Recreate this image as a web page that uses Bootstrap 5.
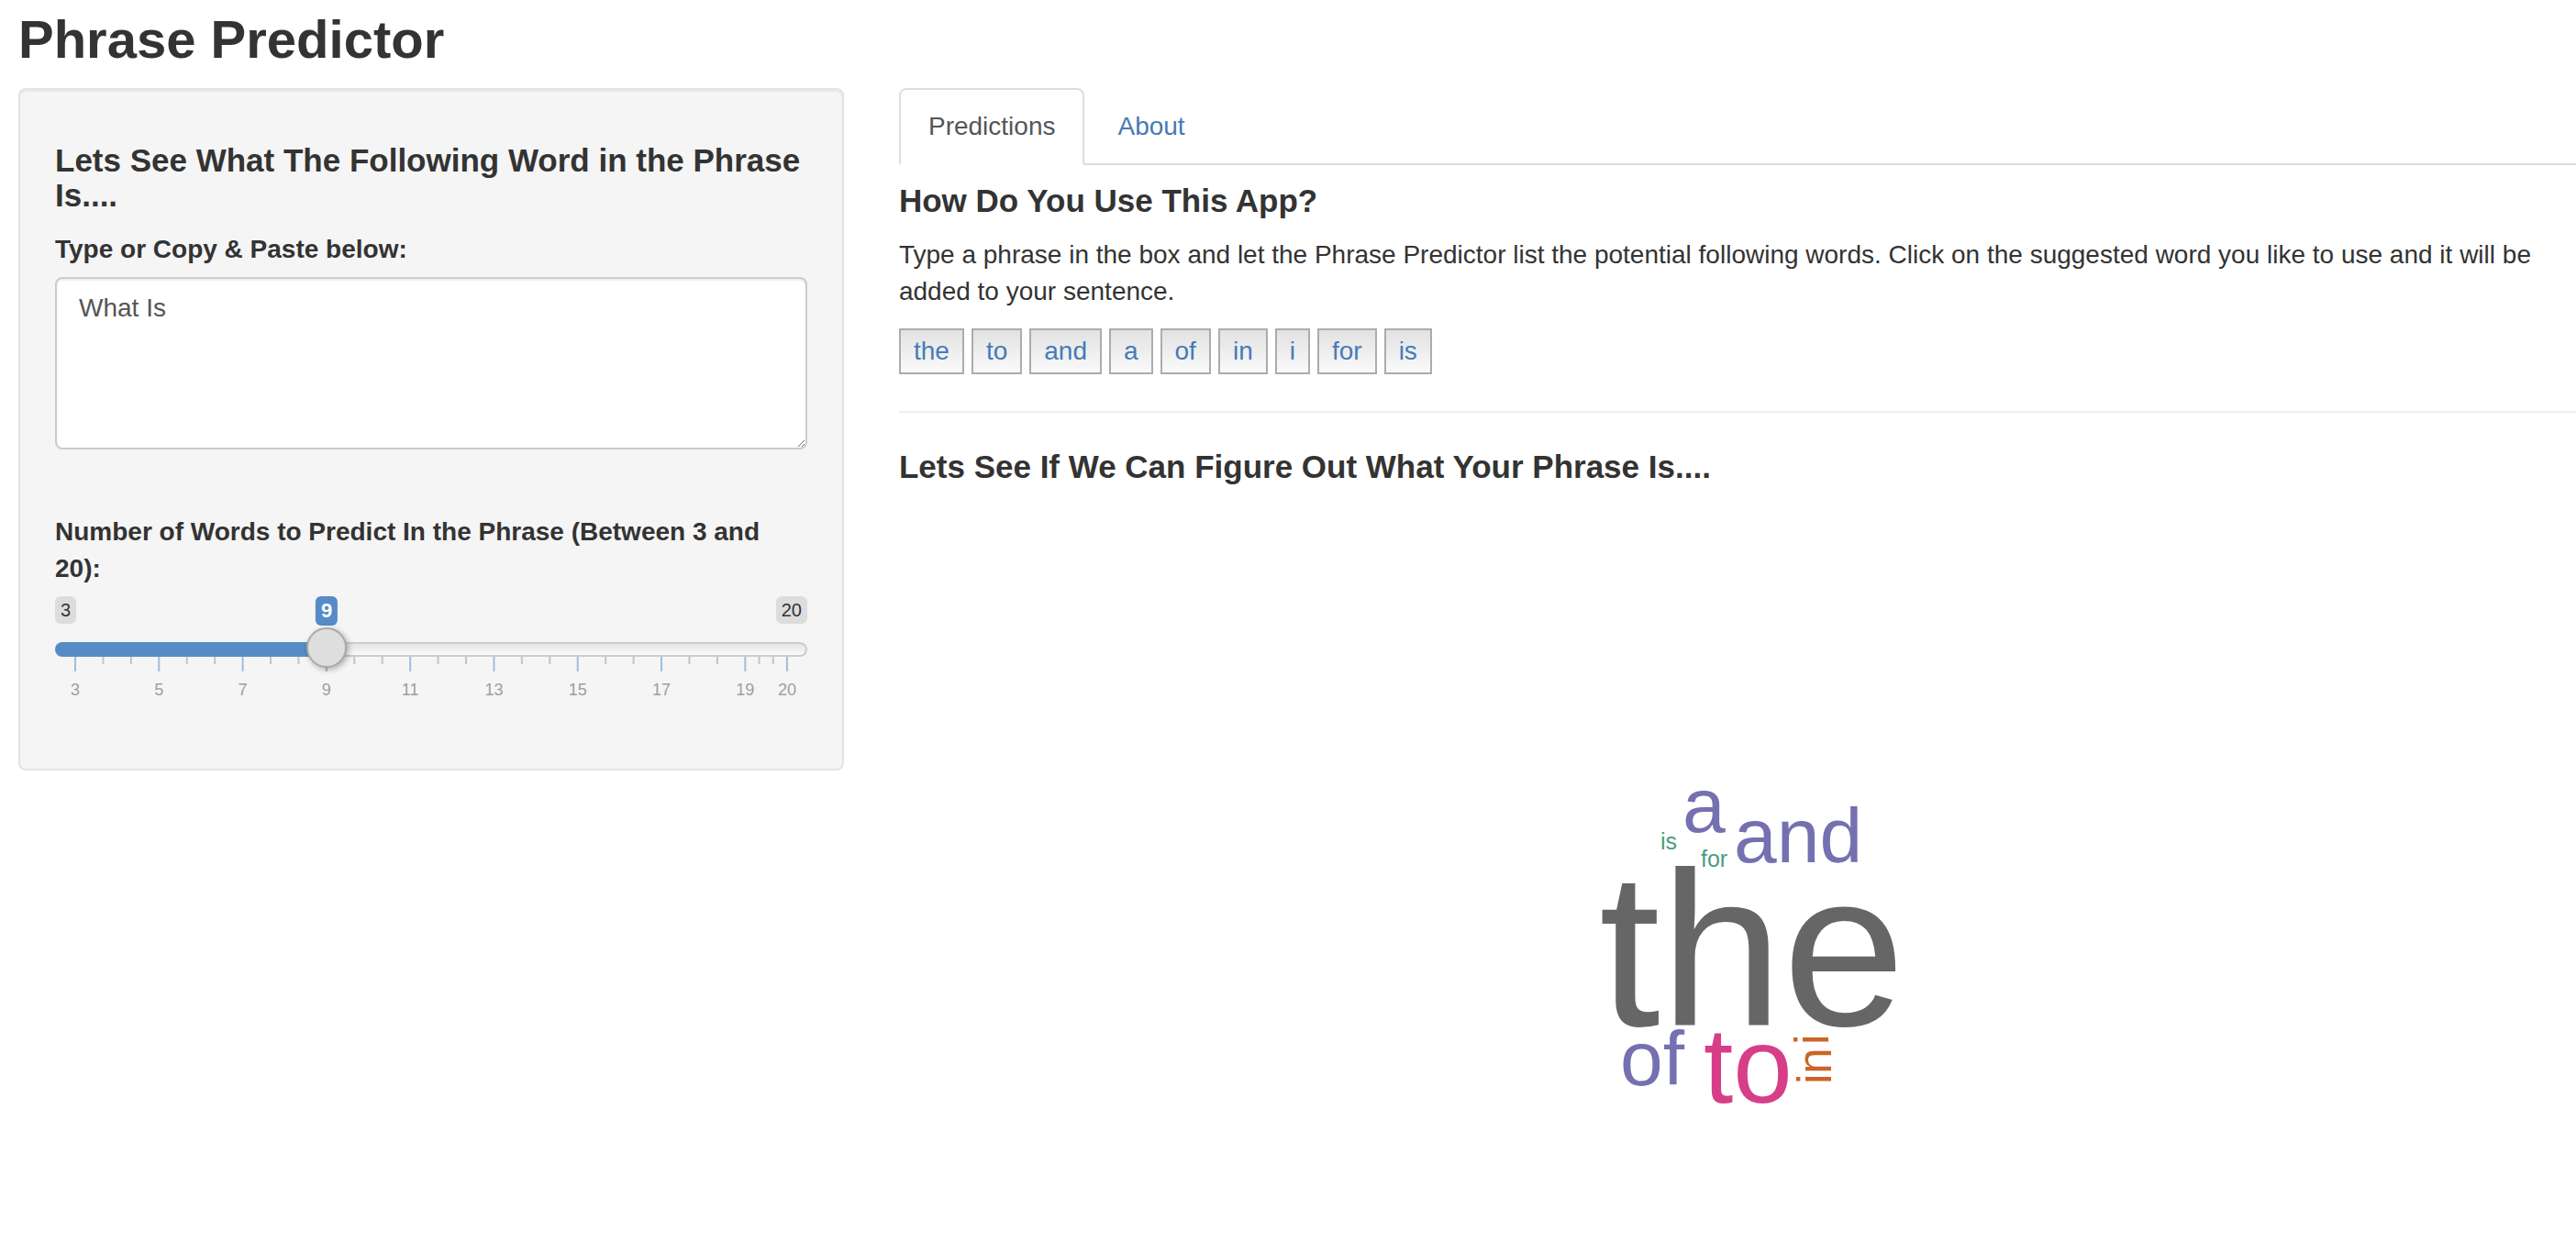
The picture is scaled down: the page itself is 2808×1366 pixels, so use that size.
<!DOCTYPE html>
<html lang="en">
<head>
<meta charset="utf-8">
<meta name="viewport" content="width=device-width, initial-scale=1">
<title>Phrase Predictor</title>
<link href="https://cdn.jsdelivr.net/npm/bootstrap@5.3.0/dist/css/bootstrap.min.css" rel="stylesheet">
<style>
  body { font-family: "Liberation Sans", Arial, sans-serif; font-size: 28px; line-height: 40px; color: #333; background: #fff; overflow-x: hidden; }
  .app-title { font-size: 58px; line-height: 66px; font-weight: 700; padding: 10px 0 20px; margin: 0; }
  .section-title { font-size: 35px; line-height: 38px; font-weight: 700; margin: 20px 0; }
  .app-shell { padding-left: 20px; }
  .layout-side { flex: 0 0 auto; width: 32.28%; }
  .layout-main { flex: 1 1 0; min-width: 0; margin-left: 60px; }
  .well { background: #f5f5f5; border: 2px solid #e3e3e3; border-radius: 8px; padding: 38px 38px 66px; box-shadow: inset 0 2px 2px rgba(0,0,0,.05); }
  .form-label { font-weight: 700; font-size: 28px; margin-bottom: 10px; display: block; }
  .phrase-box { height: 188px; font-size: 28px; line-height: 40px; padding: 12px 24px; color: #555; border: 2px solid #ccc; border-radius: 8px; box-shadow: inset 0 2px 2px rgba(0,0,0,.075); margin-bottom: 70px; }
  .range-tags { height: 36px; font-size: 20px; line-height: 30px; }
  .range-tags .limit { background: #ddd; border-radius: 6px; padding: 0 6px; height: 30px; }
  .range-now { position: absolute; top: 0; transform: translateX(-50%); background: #558bc7; color: #fff; font-size: 22px; font-weight: 700; line-height: 32px; border-radius: 6px; padding: 0 6px; }
  .word-range { -webkit-appearance: none; appearance: none; display: block; width: 100%; height: 44px; margin: 0; background: transparent; position: relative; z-index: 1; }
  .word-range::-webkit-slider-runnable-track { height: 16px; border-radius: 8px; border: 2px solid transparent; box-sizing: border-box;
    background: linear-gradient(to right, #558bc7 36%, transparent 36%) border-box, linear-gradient(to bottom, #e4e4e4, #fafafa) padding-box, linear-gradient(#ccc, #ccc) border-box; }
  .word-range::-webkit-slider-thumb { -webkit-appearance: none; width: 44px; height: 44px; margin-top: -18px; border-radius: 50%; background: #dedede; border: 2px solid #aaa; box-shadow: 2px 2px 6px rgba(0,0,0,.3); }
  .scale-ticks { display: block; width: 100%; height: 56px; overflow: visible; margin-top: -14px; }
  .scale-frame { padding: 0 22px; }
  .scale-ticks text { font-size: 18px; fill: #999fa5; text-anchor: middle; }
  .nav-tabs { border-bottom: 2px solid #ddd; --bs-nav-tabs-border-width: 2px; }
  .nav-tabs .nav-link { padding: 20px 30px; margin: 0 4px -2px 0; border: 2px solid transparent; border-radius: 8px 8px 0 0; color: #457bb7; line-height: 40px; }
  .nav-tabs .nav-link.active { color: #555; border-color: #ddd #ddd #fff; }
  .intro { margin: 0 0 20px; }
  .word-btn { height: 50px; padding: 0 14px; border: 2px solid #acacac; border-radius: 0; background: linear-gradient(to bottom, #e2e2e2, #fafafa); color: #457bb7; font-size: 28px; line-height: 44px; }
  .divider { border: 0; border-top: 2px solid #eee; opacity: 1; margin: 40px 0; }
</style>
</head>
<body>
<div class="app-shell">
  <h1 class="app-title">Phrase Predictor</h1>
  <div class="d-flex align-items-start">
    <form class="layout-side well">
      <h2 class="section-title">Lets See What The Following Word in the Phrase Is....</h2>
      <label class="form-label" for="phrase">Type or Copy &amp; Paste below:</label>
      <textarea class="form-control phrase-box" id="phrase">What Is</textarea>
      <label class="form-label" for="count">Number of Words to Predict In the Phrase (Between 3 and 20):</label>
      <div class="range-tags d-flex justify-content-between position-relative">
        <span class="limit">3</span>
        <output class="range-now" for="count" style="left: 36.1%">9</output>
        <span class="limit">20</span>
      </div>
      <input class="word-range" type="range" id="count" min="3" max="20" value="9">
      <div class="scale-frame">
        <svg class="scale-ticks" id="ticks" aria-hidden="true"></svg>
      </div>
    </form>
    <main class="layout-main">
      <ul class="nav nav-tabs">
        <li class="nav-item"><a class="nav-link active" href="#predictions">Predictions</a></li>
        <li class="nav-item"><a class="nav-link" href="#about">About</a></li>
      </ul>
      <section id="predictions">
        <h2 class="section-title">How Do You Use This App?</h2>
        <p class="intro">Type a phrase in the box and let the Phrase Predictor list the potential following words. Click on the suggested word you like to use and it will be added to your sentence.</p>
        <div class="d-flex flex-wrap gap-2">
          <button type="button" class="btn word-btn">the</button>
          <button type="button" class="btn word-btn">to</button>
          <button type="button" class="btn word-btn">and</button>
          <button type="button" class="btn word-btn">a</button>
          <button type="button" class="btn word-btn">of</button>
          <button type="button" class="btn word-btn">in</button>
          <button type="button" class="btn word-btn">i</button>
          <button type="button" class="btn word-btn">for</button>
          <button type="button" class="btn word-btn">is</button>
        </div>
        <hr class="divider">
        <h2 class="section-title">Lets See If We Can Figure Out What Your Phrase Is....</h2>
        <div class="d-flex justify-content-center">
          <svg width="800" height="800" viewBox="1494 547 800 800" role="img" aria-label="Word cloud">
            <g fill="#7570b0" font-size="84">
              <text x="1834" y="906">a</text>
              <text x="1890" y="939">and</text>
              <text x="1766" y="1182">of</text>
            </g>
            <g fill="#4a9d7c" font-size="25">
              <text x="1810" y="925">is</text>
              <text x="1854" y="944">for</text>
            </g>
            <text x="1743" y="1117" font-size="240" fill="#666">the</text>
            <text x="1857" y="1201" font-size="116" fill="#d63f88">to</text>
            <g fill="#c96527" font-size="51">
              <text transform="translate(1996 1181) rotate(-90)">in</text>
              <text transform="translate(1993 1138) rotate(-90)">i</text>
            </g>
          </svg>
        </div>
      </section>
    </main>
  </div>
</div>
<script src="https://cdn.jsdelivr.net/npm/bootstrap@5.3.0/dist/js/bootstrap.bundle.min.js"></script>
<script>
  // Scale under the slider: a labelled mark at each stop, two short marks between stops.
  const stops = [3, 5, 7, 9, 11, 13, 15, 17, 19, 20];
  const at = v => (v - 3) / 17 * 100 + '%';
  const line = (v, len, colour) =>
    `<line x1="${at(v)}" x2="${at(v)}" y1="0" y2="${len}" stroke="${colour}" stroke-width="2"/>`;
  document.getElementById('ticks').innerHTML = stops.map((v, i) => {
    let out = line(v, 16, '#a0bedd') + `<text x="${at(v)}" y="42">${v}</text>`;
    if (i < stops.length - 1) {
      const step = (stops[i + 1] - v) / 3;
      out += line(v + step, 8, '#c4c4c4') + line(v + 2 * step, 8, '#c4c4c4');
    }
    return out;
  }).join('');

  // Keep the value tag above the thumb as it moves.
  const range = document.getElementById('count');
  const tag = document.querySelector('.range-now');
  range.addEventListener('input', () => {
    tag.textContent = range.value;
    tag.style.left = `calc(22px + (100% - 44px) * ${(range.value - 3) / 17})`;
  });
</script>
</body>
</html>
